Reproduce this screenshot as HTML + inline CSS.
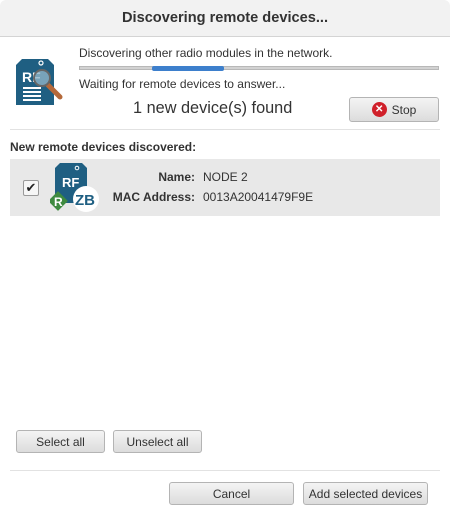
<!DOCTYPE html>
<html><head><style>
body{margin:0;width:450px;height:522px;background:#fff;font-family:"Liberation Sans",sans-serif;color:#333;position:relative;overflow:hidden;font-size:12px}
.a{position:absolute}
.title{left:0;top:0;width:450px;height:36px;background:#f2f2f2;border-bottom:1px solid #d4d4d4;border-radius:6px 6px 0 0;text-align:center;font-weight:bold;font-size:14.6px;line-height:37px;color:#333}
.btn{position:absolute;height:23px;border:1px solid #b4b4b4;border-radius:3px;background:linear-gradient(#f4f4f4,#dcdcdc);font-size:12px;color:#333;box-sizing:border-box;display:flex;align-items:center;justify-content:center}
.sep{height:1px;background:#e2e2e2}
</style></head><body>
<div class="a title">Discovering remote devices...</div>
<svg class="a" style="left:14px;top:59px" width="54" height="48" viewBox="0 0 54 48">
<path d="M2 6 L8 0 H34 L40 6 V46 H2Z" fill="#1f5f82"/>
<circle cx="27" cy="4" r="2" fill="none" stroke="#fff" stroke-width="1.2"/>
<text x="8" y="23" font-family="Liberation Sans" font-weight="bold" font-size="14" fill="#fff">RF</text>
<g fill="#fff"><rect x="9" y="28" width="18" height="2"/><rect x="9" y="32" width="18" height="2"/><rect x="9" y="36" width="18" height="2"/><rect x="9" y="40" width="18" height="2"/></g>
<line x1="34" y1="26" x2="46" y2="38" stroke="#b5693a" stroke-width="5" stroke-linecap="round"/>
<circle cx="28" cy="19" r="8" fill="#8fb4c8" fill-opacity=".8" stroke="#666" stroke-width="2"/>
</svg>
<div class="a" style="left:79px;top:46px">Discovering other radio modules in the network.</div>
<div class="a" style="left:79px;top:66px;width:360px;height:4px;background:#d2d2d2;border:1px solid #b8b8b8;box-sizing:border-box"></div>
<div class="a" style="left:152px;top:66px;width:72px;height:5px;background:#3d7fcc;border-radius:2px"></div>
<div class="a" style="left:79px;top:77px">Waiting for remote devices to answer...</div>
<div class="a" style="left:133px;top:99px;font-size:16.3px">1 new device(s) found</div>
<div class="btn" style="left:349px;top:97px;width:90px;height:25px"><span style="display:inline-block;width:15px;height:15px;border-radius:50%;background:#d0202a;color:#fff;font-size:10px;line-height:15px;text-align:center;font-weight:bold;margin-right:5px">✕</span>Stop</div>
<div class="a sep" style="left:10px;top:129px;width:430px"></div>
<div class="a" style="left:10px;top:140px;font-weight:bold">New remote devices discovered:</div>
<div class="a" style="left:10px;top:159px;width:430px;height:57px;background:#e8e8e8"></div>
<div class="a" style="left:23px;top:180px;width:14px;height:14px;border:1px solid #999;border-radius:2px;background:#f6f6f6;font-size:13px;line-height:14px;text-align:center;color:#222">✔</div>
<svg class="a" style="left:50px;top:163px" width="52" height="50" viewBox="0 0 52 50">
<path d="M5 5 L10 0 H32 L37 5 V40 H5Z" fill="#1f5f82"/>
<circle cx="27" cy="5" r="1.8" fill="none" stroke="#fff"/>
<text x="12" y="24" font-family="Liberation Sans" font-weight="bold" font-size="13" fill="#fff">RF</text>
<rect x="1" y="31" width="14" height="14" transform="rotate(45 8 38)" fill="#3e8a3f"/>
<text x="4" y="43" font-family="Liberation Sans" font-weight="bold" font-size="12" fill="#fff">R</text>
<circle cx="36" cy="36" r="13" fill="#fff"/>
<text x="25" y="42" font-family="Liberation Sans" font-weight="bold" font-size="15" fill="#1f5f82">ZB</text>
</svg>
<div class="a" style="left:100px;top:170px;width:95px;text-align:right;font-weight:bold">Name:</div>
<div class="a" style="left:203px;top:170px">NODE 2</div>
<div class="a" style="left:90px;top:190px;width:105px;text-align:right;font-weight:bold">MAC Address:</div>
<div class="a" style="left:203px;top:190px">0013A20041479F9E</div>
<div class="btn" style="left:16px;top:430px;width:89px">Select all</div>
<div class="btn" style="left:113px;top:430px;width:89px">Unselect all</div>
<div class="a sep" style="left:10px;top:470px;width:430px"></div>
<div class="btn" style="left:169px;top:482px;width:125px">Cancel</div>
<div class="btn" style="left:303px;top:482px;width:125px">Add selected devices</div>
</body></html>
